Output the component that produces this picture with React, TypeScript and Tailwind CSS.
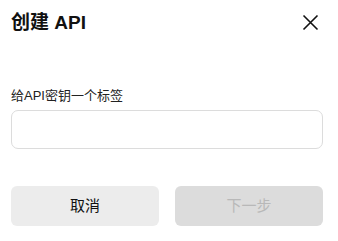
import React from "react";

export default function App() {
  return (
    <div
      className="w-[338px] h-[241px] bg-white pl-[11px] pr-[15px] pt-[10px]"
      style={{ fontFamily: '"Liberation Sans", "Noto Sans CJK SC", sans-serif' }}
    >
      <div className="flex items-center justify-between h-[24px]">
        <h1 className="text-[19px] font-bold text-[#111] leading-none">创建 API</h1>
        <svg width="17" height="17" viewBox="0 0 17 17" className="mr-[4px]">
          <path d="M1.5 1.5 L15.5 15.5 M15.5 1.5 L1.5 15.5" stroke="#111" strokeWidth="1.6" />
        </svg>
      </div>
      <div className="mt-[54px] text-[13px] text-[#222] leading-[16px]">给API密钥一个标签</div>
      <input className="mt-[6px] w-full h-[39px] rounded-[7px] border border-[#dcdcdc] outline-none px-3" />
      <div className="mt-[37px] flex gap-[16px]">
        <button className="flex-1 h-[40px] rounded-[6px] bg-[#ececec] text-[15px] text-[#111]">取消</button>
        <button className="flex-1 h-[40px] rounded-[6px] bg-[#dcdcdc] text-[15px] text-[#b8b8b8]">下一步</button>
      </div>
    </div>
  );
}
